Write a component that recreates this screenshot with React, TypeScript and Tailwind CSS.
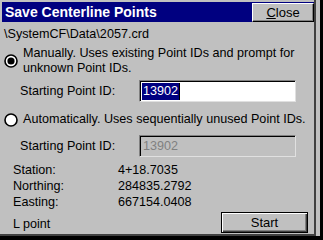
function Radio({ checked }: { checked: boolean }) {
  return (
    <svg width="14" height="14" viewBox="0 0 14 14" className="shrink-0">
      <circle cx="7" cy="7" r="6" fill="#ffffff" stroke="#000000" strokeWidth="1.6" />
      {checked && <circle cx="7" cy="7" r="3.6" fill="#000000" />}
    </svg>
  );
}

export default function App() {
  return (
    <div className="w-[323px] h-[240px] bg-black flex items-start font-['Liberation_Sans',Arial,sans-serif] text-[12.6px] leading-[15px] text-black whitespace-nowrap">
      <div className="w-[316px] h-[236px] shrink-0 bg-[#c0c0c0] border-r-2 border-b-2 border-[#404040] pt-[2px] pl-[2px] flex flex-col">
        {/* Title bar */}
        <div className="h-[20px] shrink-0 bg-[#000080] flex items-center justify-between pl-[3px]">
          <span className="text-white font-bold text-[14px]">Save Centerline Points</span>
          <button className="w-[62px] h-[19px] shrink-0 bg-[#c0c0c0] border-t border-l border-white border-b border-r border-b-black border-r-black shadow-[inset_-1px_-1px_0_#808080] flex items-center justify-center text-[13px]">
            <span><span className="underline">C</span>lose</span>
          </button>
        </div>

        <div className="pl-[2px] pr-[4px] flex flex-col">
          <div className="mt-[5px] h-[15px]">\SystemCF\Data\2057.crd</div>

          <div className="mt-[4px] flex items-center gap-[5px]">
            <Radio checked />
            <div>
              Manually. Uses existing Point IDs and prompt for
              <br />
              unknown Point IDs.
            </div>
          </div>

          <div className="mt-[4px] flex items-center">
            <span className="w-[135px] shrink-0 pl-[16px]">Starting Point ID:</span>
            <div className="w-[157px] h-[22px] shrink-0 bg-white border-t border-l border-[#808080] border-b border-r border-b-[#e0e0e0] border-r-[#e0e0e0] shadow-[inset_1px_1px_0_#000000] flex items-center pl-[2px]">
              <span className="bg-[#000080] text-white leading-[17px] px-[1px]">13902</span>
              <span className="w-[1px] h-[17px] bg-black"></span>
            </div>
          </div>

          <div className="mt-[10px] flex items-center gap-[5px]">
            <Radio checked={false} />
            <span>Automatically. Uses sequentially unused Point IDs.</span>
          </div>

          <div className="mt-[8px] flex items-center">
            <span className="w-[135px] shrink-0 pl-[16px]">Starting Point ID:</span>
            <div className="w-[157px] h-[22px] shrink-0 bg-[#c0c0c0] border-t border-l border-[#808080] border-b border-r border-b-[#e0e0e0] border-r-[#e0e0e0] shadow-[inset_1px_1px_0_#000000] flex items-center pl-[3px] text-[#808080]">
              13902
            </div>
          </div>

          <div className="mt-[5px] flex flex-col leading-[16px] pl-[9px]">
            <div className="flex"><span className="w-[105px] shrink-0">Station:</span><span>4+18.7035</span></div>
            <div className="flex"><span className="w-[105px] shrink-0">Northing:</span><span>284835.2792</span></div>
            <div className="flex"><span className="w-[105px] shrink-0">Easting:</span><span>667154.0408</span></div>
          </div>

          <div className="mt-[2px] flex items-center justify-between pl-[9px] pr-[2px]">
            <span className="pt-[4px]">L point</span>
            <button className="w-[87px] h-[21px] shrink-0 border border-black bg-[#c0c0c0] shadow-[inset_1px_1px_0_#ffffff,inset_-1px_-1px_0_#404040,inset_-2px_-2px_0_#808080] flex items-center justify-center text-[13px]">
              Start
            </button>
          </div>
        </div>
      </div>
      <div className="w-[4px] h-[236px] shrink-0 bg-[#c0c0c0]"></div>
    </div>
  );
}
